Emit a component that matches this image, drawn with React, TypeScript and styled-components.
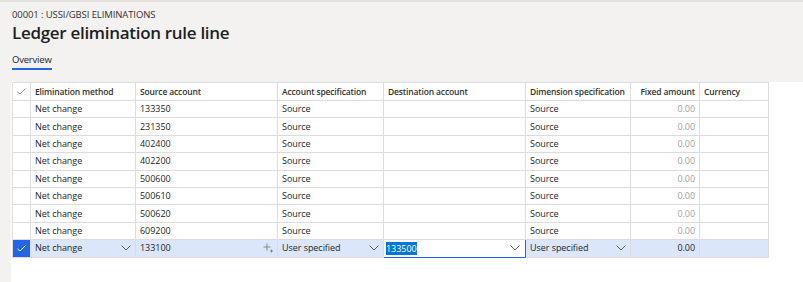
import styled, { createGlobalStyle } from "styled-components";

const GlobalStyle = createGlobalStyle`
    html, body {
        margin: 0;
        padding: 0;
        background: #ffffff;
        font-family: "Segoe UI", "Open Sans", "Noto Sans", sans-serif;
        color: #201f1e;
    }
`;

const Page = styled.div`
    width: 803px;
    height: 282px;
    display: flex;
    flex-direction: column;
    overflow: hidden;
`;

const Header = styled.header`
    height: 80px;
    background: #f3f2f1;
    border-top: 2px solid #e1dfdd;
    padding-left: 12px;
    display: flex;
    flex-direction: column;
`;

const Crumb = styled.div`
    margin-top: 6px;
    font-size: 9.5px;
    line-height: 13px;
    color: #323130;
    letter-spacing: -0.1px;
`;

const Title = styled.h1`
    margin: 0;
    font-size: 17px;
    line-height: 24px;
    font-weight: 600;
    letter-spacing: -0.3px;
    color: #201f1e;
`;

const Tab = styled.div`
    margin-top: 8px;
    align-self: flex-start;
    font-size: 9.5px;
    line-height: 13px;
    padding-bottom: 2px;
    border-bottom: 2px solid #2266e3;
    color: #201f1e;
    letter-spacing: -0.2px;
`;

const Body = styled.div`
    flex: 1;
    display: flex;
`;

const Gutter = styled.div`
    width: 11px;
    background: #f3f2f1;
`;

const Content = styled.div`
    flex: 1;
    background: #ffffff;
    padding-left: 1px;
`;

const Grid = styled.table`
    border-collapse: collapse;
    table-layout: fixed;
    width: 756px;
    font-size: 9px;
`;

const HeadCell = styled.th<{ $right?: boolean }>`
    height: 17px;
    padding: 0 4px;
    border: 1px solid #dcdcdc;
    font-weight: 600;
    font-size: 8.5px;
    color: #323130;
    text-align: ${(p) => (p.$right ? "right" : "left")};
    white-space: nowrap;
    overflow: hidden;
    letter-spacing: -0.15px;
`;

const Row = styled.tr<{ $selected?: boolean }>`
    height: 17.4px;
    background: ${(p) => (p.$selected ? "#dce6fa" : "#ffffff")};
`;

const Cell = styled.td<{ $right?: boolean; $muted?: boolean }>`
    padding: 0 4px;
    border: 1px solid #dcdcdc;
    text-align: ${(p) => (p.$right ? "right" : "left")};
    color: ${(p) => (p.$muted ? "#a19f9d" : "#201f1e")};
    white-space: nowrap;
    overflow: hidden;
    letter-spacing: -0.05px;
    line-height: 14px;
`;

const CheckCell = styled.td<{ $on?: boolean }>`
    border: 1px solid #dcdcdc;
    background: ${(p) => (p.$on ? "#2266e3" : "transparent")};
    padding: 0;
    text-align: center;
`;

const FieldInner = styled.div`
    display: flex;
    align-items: center;
    justify-content: space-between;
`;

const ActiveCell = styled.td`
    padding: 0 5px 0 2px;
    border: 1px solid #2266e3;
    background: #ffffff;
`;

const Selected = styled.span`
    background: #0078d7;
    color: #ffffff;
    letter-spacing: -0.05px;
`;

const Chevron = () => (
    <svg width="10" height="6" viewBox="0 0 10 6">
        <path d="M0.5 0.5 L5 5 L9.5 0.5" fill="none" stroke="#605e5c" strokeWidth="1" />
    </svg>
);

const Check = ({ color }: { color: string }) => (
    <svg width="9" height="7" viewBox="0 0 9 7" style={{ display: "block", margin: "0 auto" }}>
        <path d="M0.5 3.8 L3 6 L8.5 0.6" fill="none" stroke={color} strokeWidth="1" />
    </svg>
);

const Lookup = () => (
    <svg width="10" height="10" viewBox="0 0 10 10">
        <path d="M4 0.5 V7.5 M0.5 4 H7.5" stroke="#8a8886" strokeWidth="1" fill="none" />
        <path d="M8.5 6.5 V9.5 M7 8 H10" stroke="#8a8886" strokeWidth="1" fill="none" />
    </svg>
);

const widths = [18, 105, 142, 106, 142, 105, 69, 69];

const rows = ["133350", "231350", "402400", "402200", "500600", "500610", "500620", "609200"];

export default function App() {
    return (
        <>
            <GlobalStyle />
            <Page>
                <Header>
                    <Crumb>00001 : USSI/GBSI ELIMINATIONS</Crumb>
                    <Title>Ledger elimination rule line</Title>
                    <Tab>Overview</Tab>
                </Header>
                <Body>
                    <Gutter />
                    <Content>
                        <Grid>
                            <colgroup>
                                {widths.map((w, i) => (
                                    <col key={i} style={{ width: w }} />
                                ))}
                            </colgroup>
                            <thead>
                                <tr>
                                    <HeadCell style={{ padding: 0 }}>
                                        <Check color="#8a8886" />
                                    </HeadCell>
                                    <HeadCell>Elimination method</HeadCell>
                                    <HeadCell>Source account</HeadCell>
                                    <HeadCell>Account specification</HeadCell>
                                    <HeadCell>Destination account</HeadCell>
                                    <HeadCell>Dimension specification</HeadCell>
                                    <HeadCell $right>Fixed amount</HeadCell>
                                    <HeadCell>Currency</HeadCell>
                                </tr>
                            </thead>
                            <tbody>
                                {rows.map((acc) => (
                                    <Row key={acc}>
                                        <CheckCell />
                                        <Cell>Net change</Cell>
                                        <Cell>{acc}</Cell>
                                        <Cell>Source</Cell>
                                        <Cell />
                                        <Cell>Source</Cell>
                                        <Cell $right $muted>0.00</Cell>
                                        <Cell />
                                    </Row>
                                ))}
                                <Row $selected>
                                    <CheckCell $on>
                                        <Check color="#ffffff" />
                                    </CheckCell>
                                    <Cell>
                                        <FieldInner>
                                            Net change
                                            <Chevron />
                                        </FieldInner>
                                    </Cell>
                                    <Cell>
                                        <FieldInner>
                                            133100
                                            <Lookup />
                                        </FieldInner>
                                    </Cell>
                                    <Cell>
                                        <FieldInner>
                                            User specified
                                            <Chevron />
                                        </FieldInner>
                                    </Cell>
                                    <ActiveCell>
                                        <FieldInner>
                                            <Selected>133500</Selected>
                                            <Chevron />
                                        </FieldInner>
                                    </ActiveCell>
                                    <Cell>
                                        <FieldInner>
                                            User specified
                                            <Chevron />
                                        </FieldInner>
                                    </Cell>
                                    <Cell $right>0.00</Cell>
                                    <Cell />
                                </Row>
                            </tbody>
                        </Grid>
                    </Content>
                </Body>
            </Page>
        </>
    );
}
